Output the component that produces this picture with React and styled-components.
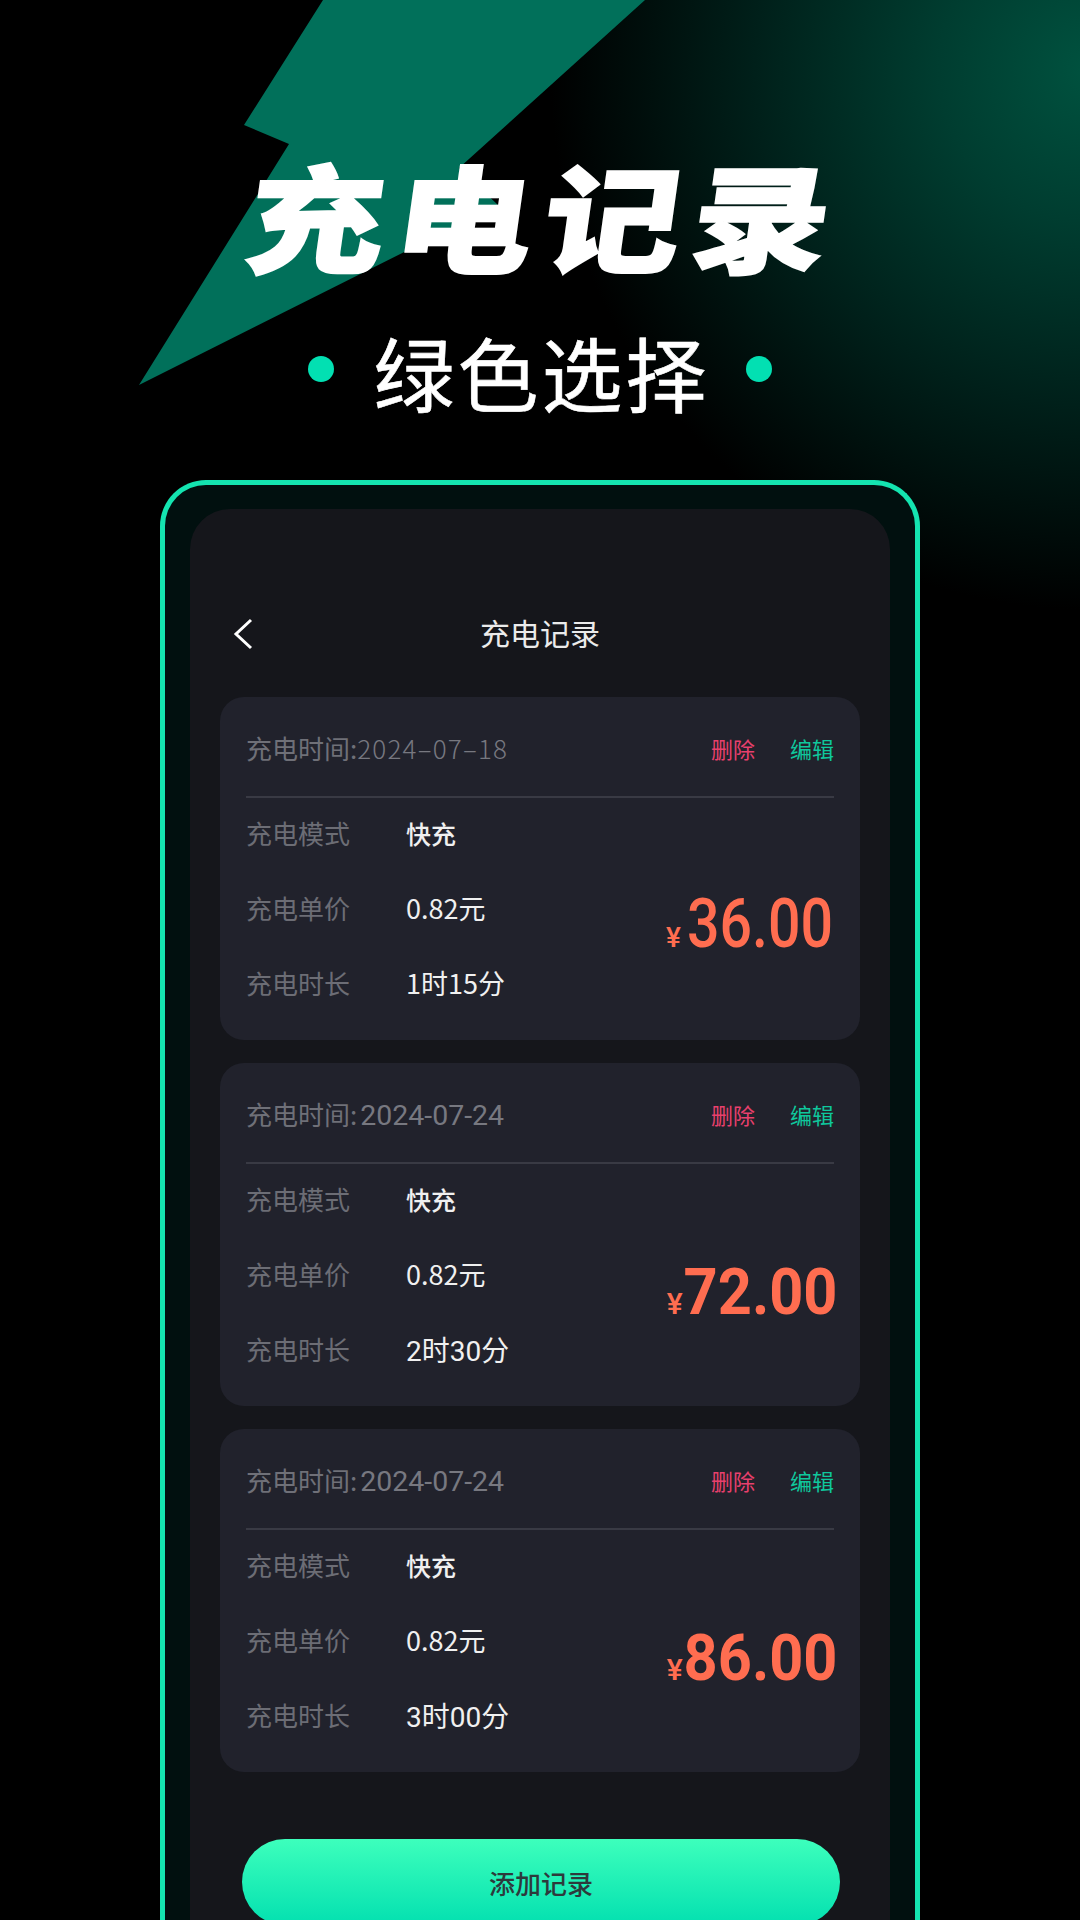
import React from 'react';
import styled, { createGlobalStyle } from 'styled-components';

const zh = '"Noto Sans CJK SC", "Noto Sans", sans-serif';
const din = 'Roboto, "Noto Sans CJK SC", sans-serif';

const GlobalStyle = createGlobalStyle`
  html, body {
    margin: 0;
    padding: 0;
    background: #000;
  }
  * {
    box-sizing: border-box;
  }
`;

const Page = styled.div`
  position: relative;
  width: 1080px;
  height: 1920px;
  overflow: hidden;
  display: flex;
  flex-direction: column;
  align-items: center;
  font-family: ${zh};
  background:
    radial-gradient(circle 540px at 1090px 70px, #00523f 0%, #003d30 28%, #00201a 62%, #000 100%),
    #000;
`;

const Bolt = styled.svg`
  position: absolute;
  top: 0;
  left: 0;
`;

const Title = styled.h1`
  position: relative;
  margin: 135px 0 0;
  height: 156px;
  line-height: 156px;
  font-size: 130px;
  font-weight: 900;
  letter-spacing: 10px;
  padding-left: 10px;
  color: #fff;
  white-space: nowrap;
  -webkit-text-stroke: 2px #fff;
  transform: skewX(-8deg) scale(1.06, 0.9);
`;

const SubRow = styled.div`
  position: relative;
  display: flex;
  align-items: center;
  gap: 39px;
  margin-top: 28px;
  height: 100px;
`;

const Dot = styled.span`
  width: 26px;
  height: 26px;
  border-radius: 50%;
  background: #02e0b2;
`;

const Subtitle = styled.div`
  font-size: 81px;
  font-weight: 400;
  line-height: 100px;
  letter-spacing: 3px;
  margin-right: -3px;
  margin-top: 4px;
  color: #fff;
  white-space: nowrap;
  -webkit-text-stroke: 0.6px #fff;
`;

const Frame = styled.div`
  position: relative;
  width: 760px;
  margin-top: 61px;
  flex: 1;
  padding: 24px 25px 0;
  border: 5px solid #14e4b0;
  border-bottom: 0;
  border-radius: 46px 46px 0 0;
  background: #01100f;
`;

const Screen = styled.div`
  height: 100%;
  padding: 95px 30px 0;
  border-radius: 40px 40px 0 0;
  background: #15161b;
`;

const Nav = styled.div`
  position: relative;
  display: flex;
  align-items: center;
  justify-content: center;
  height: 56px;
  font-size: 30px;
  color: #ebebeb;
`;

const Back = styled.svg`
  position: absolute;
  left: 12px;
  top: 12px;
`;

const List = styled.div`
  display: flex;
  flex-direction: column;
  gap: 23px;
  margin-top: 37px;
`;

const Card = styled.div`
  height: 343px;
  padding: 0 26px;
  border-radius: 24px;
  background: #21222c;
`;

const CardHead = styled.div`
  display: flex;
  align-items: center;
  height: 101px;
  padding-top: 2px;
  border-bottom: 2px solid #393a44;
`;

const When = styled.div`
  flex: 1;
  font-size: 26px;
  color: #6f7078;
  white-space: nowrap;
`;

const Date = styled.span`
  font-family: ${(p) => (p.$din ? din : zh)};
  font-size: ${(p) => (p.$din ? 28.5 : 26)}px;
  font-weight: ${(p) => (p.$din ? 400 : 300)};
  letter-spacing: ${(p) => (p.$din ? 0 : 1.2)}px;
  margin-left: ${(p) => (p.$din ? 3 : 0)}px;
  color: #777880;
`;

const Action = styled.button`
  border: 0;
  padding: 0;
  margin-left: 35px;
  background: none;
  font-family: ${zh};
  font-size: 22px;
  color: ${(p) => p.$color};
`;

const CardBody = styled.div`
  display: flex;
  align-items: flex-start;
  justify-content: space-between;
  margin-top: -3px;
`;

const Rows = styled.div`
  display: flex;
  flex-direction: column;
`;

const Row = styled.div`
  display: flex;
  align-items: center;
  height: 75px;
`;

const Label = styled.span`
  width: 161px;
  font-size: 26px;
  color: #6c6d75;
`;

const Value = styled.span`
  font-family: ${(p) => (p.$din ? din : zh)};
  font-size: ${(p) => p.$size || 27}px;
  font-weight: ${(p) => p.$weight || 400};
  margin-left: -1px;
  color: #f0f0f0;
  white-space: nowrap;
`;

const Price = styled.div`
  display: flex;
  align-items: baseline;
  margin-top: ${(p) => (p.$bold ? 97 : 94)}px;
  color: #ff6d50;
  font-family: Roboto, sans-serif;
`;

const Yen = styled.span`
  font-size: ${(p) => (p.$bold ? 30 : 28)}px;
  font-weight: 500;
  margin-right: ${(p) => (p.$bold ? 0 : 6)}px;
`;

const Amount = styled.span`
  display: inline-block;
  font-size: ${(p) => (p.$bold ? 64 : 69)}px;
  font-weight: ${(p) => (p.$bold ? 700 : 500)};
  line-height: 70px;
  margin-right: ${(p) => (p.$bold ? -3 : 1)}px;
  margin-left: ${(p) => (p.$bold ? -11 : -30)}px;
  transform-origin: right center;
  transform: scaleX(${(p) => (p.$bold ? 0.93 : 0.83)});
`;

const AddButton = styled.button`
  display: block;
  width: 598px;
  height: 86px;
  margin: 67px 0 0 22px;
  border: 0;
  border-radius: 43px;
  background: linear-gradient(180deg, #3dffbc 0%, #03e0b0 100%);
  font-family: ${zh};
  font-size: 26px;
  font-weight: 500;
  color: #2d3a3c;
`;

const records = [
  { date: '2024–07–18', price: '36.00', duration: '1时15分' },
  { date: '2024-07-24', price: '72.00', duration: '2时30分', din: true },
  { date: '2024-07-24', price: '86.00', duration: '3时00分', din: true },
];

const RecordCard = ({ date, price, duration, din: isDin }) => (
  <Card>
    <CardHead>
      <When>
        充电时间:<Date $din={isDin}>{date}</Date>
      </When>
      <Action $color="#e9406d">删除</Action>
      <Action $color="#0fc79c">编辑</Action>
    </CardHead>
    <CardBody>
      <Rows>
        <Row>
          <Label>充电模式</Label>
          <Value $size={25} $weight={500}>快充</Value>
        </Row>
        <Row>
          <Label>充电单价</Label>
          <Value>0.82元</Value>
        </Row>
        <Row>
          <Label>充电时长</Label>
          <Value $din={isDin} $size={isDin ? 28 : 27}>{duration}</Value>
        </Row>
      </Rows>
      <Price $bold={isDin}>
        <Yen $bold={isDin}>¥</Yen>
        <Amount $bold={isDin}>{price}</Amount>
      </Price>
    </CardBody>
  </Card>
);

export default function App() {
  return (
    <Page>
      <GlobalStyle />
      <Bolt width="1080" height="400" viewBox="0 0 1080 400">
        <polygon
          points="323,0 645,0 459,168 498,205 139,385 289,144 244,125"
          fill="#01705a"
        />
      </Bolt>
      <Title>充电记录</Title>
      <SubRow>
        <Dot />
        <Subtitle>绿色选择</Subtitle>
        <Dot />
      </SubRow>
      <Frame>
        <Screen>
          <Nav>
            <Back width="24" height="36" viewBox="0 0 24 36">
              <path d="M19 4 L4 18 L19 32" fill="none" stroke="#fff" strokeWidth="3" />
            </Back>
            充电记录
          </Nav>
          <List>
            {records.map((r) => (
              <RecordCard key={r.price} {...r} />
            ))}
          </List>
          <AddButton>添加记录</AddButton>
        </Screen>
      </Frame>
    </Page>
  );
}
